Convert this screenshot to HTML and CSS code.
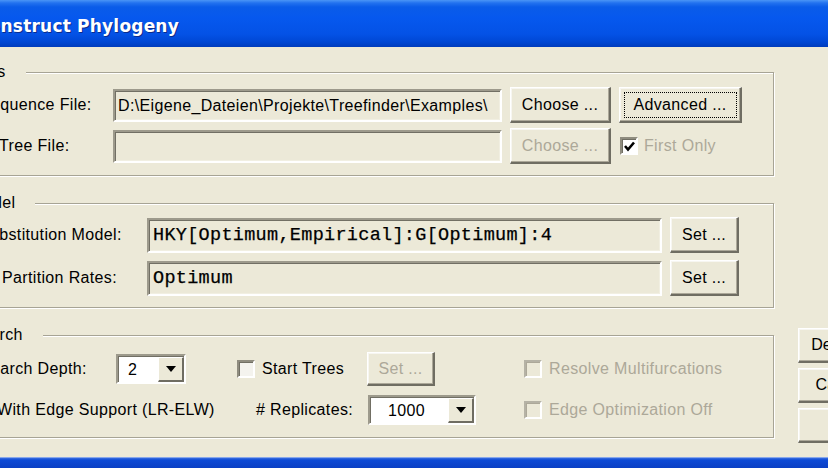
FILE: index.html
```html
<!DOCTYPE html>
<html lang="en">
<head>
    <meta charset="UTF-8">
    <title>Construct Phylogeny</title>
    <link rel="stylesheet" href="styles.css">
</head>
<body>
    <div class="titlebar"><span class="title">Construct Phylogeny</span></div>
    <div class="client">
        <div class="groups">
            <div class="group files">
                <div class="legend">Files</div>
                <div class="rows">
                    <div class="row">
                        <span class="lbl">Sequence File:</span>
                        <span class="edit">D:\Eigene_Dateien\Projekte\Treefinder\Examples\</span>
                        <button class="btn choose">Choose ...</button>
                        <button class="btn advanced">Advanced ...</button>
                    </div>
                    <div class="row">
                        <span class="lbl tree">Tree File:</span>
                        <span class="edit"></span>
                        <button class="btn choose" disabled>Choose ...</button>
                        <span class="check checked first">
                            <svg width="13" height="13" viewBox="0 0 13 13"><path d="M2 6 L5 9.5 L11 2.5" fill="none" stroke="#000" stroke-width="2.6"/></svg>
                        </span>
                        <span class="check-text off">First Only</span>
                    </div>
                </div>
            </div>

            <div class="group model">
                <div class="legend">Model</div>
                <div class="rows">
                    <div class="row">
                        <span class="lbl subst">Substitution Model:</span>
                        <span class="edit mono">HKY[Optimum,Empirical]:G[Optimum]:4</span>
                        <button class="btn set">Set ...</button>
                    </div>
                    <div class="row">
                        <span class="lbl partition">Partition Rates:</span>
                        <span class="edit mono">Optimum</span>
                        <button class="btn set">Set ...</button>
                    </div>
                </div>
            </div>

            <div class="group search">
                <div class="legend">Search</div>
                <div class="grid">
                    <div class="cell">
                        <span class="lbl">Search Depth:</span>
                        <span class="combo depth">
                            <span class="val">2</span>
                            <span class="arrow"><svg width="10" height="6" viewBox="0 0 10 6"><path d="M0 0 H10 L5 6 Z" fill="#000"/></svg></span>
                        </span>
                    </div>
                    <div class="cell">
                        <span class="check"></span>
                        <span class="check-text">Start Trees</span>
                    </div>
                    <div class="cell">
                        <button class="btn set-small" disabled>Set ...</button>
                    </div>
                    <div class="cell">
                        <span class="check off"></span>
                        <span class="check-text off">Resolve Multifurcations</span>
                    </div>

                    <div class="cell">
                        <span class="lbl edge">With Edge Support (LR-ELW)</span>
                    </div>
                    <div class="cell">
                        <span class="lbl replicates"># Replicates:</span>
                    </div>
                    <div class="cell">
                        <span class="combo reps">
                            <span class="val">1000</span>
                            <span class="arrow"><svg width="10" height="6" viewBox="0 0 10 6"><path d="M0 0 H10 L5 6 Z" fill="#000"/></svg></span>
                        </span>
                    </div>
                    <div class="cell">
                        <span class="check off"></span>
                        <span class="check-text off">Edge Optimization Off</span>
                    </div>
                </div>
            </div>
        </div>

        <div class="side">
            <button class="btn side-btn">Defaults</button>
            <button class="btn side-btn">Cancel</button>
            <button class="btn side-btn">OK</button>
        </div>
    </div>
    <div class="frame-bottom"></div>
</body>
</html>
```

FILE: styles.css
```css
* {
    box-sizing: border-box;
}
body {
    margin: 0;
    width: 828px;
    height: 468px;
    overflow: hidden;
    background: #ece9d8;
    font-family: "Liberation Sans", Arial, sans-serif;
    font-size: 16px;
    letter-spacing: 0.35px;
    color: #000;
}

/* title bar */
.titlebar {
    height: 47px;
    display: flex;
    align-items: center;
    background: linear-gradient(to bottom, #4a95f6 0, #2272ef 3px, #0a5ce9 7px, #0658ee 18px, #0452e6 34px, #0047d4 42px, #003cbc 47px);
}
.title {
    margin: 4px 0 0 -24px;
    font-family: "DejaVu Sans", sans-serif;
    font-weight: bold;
    font-size: 17px;
    letter-spacing: 0.2px;
    color: #fff;
    text-shadow: 1px 1px 0 #0b2c8c;
    white-space: nowrap;
}

/* client area */
.client {
    display: flex;
    height: 410px;
    padding-top: 25px;
}
.groups {
    flex: none;
    width: 814px;
    margin-left: -40px;
}
.group {
    border: 1px solid #a7a495;
    box-shadow: inset 1px 1px 0 #fff, 1px 1px 0 #fff;
    padding: 0 0 11px 19px;
}
.group + .group {
    margin-top: 27px;
}
.legend {
    width: max-content;
    height: 18px;
    line-height: 18px;
    margin: -10px 0 0 -10px;
    padding-right: 20px;
    background: #ece9d8;
    white-space: nowrap;
}
.rows {
    display: flex;
    flex-direction: column;
    gap: 5px;
    margin-top: 6px;
}
.model .rows {
    gap: 7px;
    margin-top: 5px;
}
.row {
    display: flex;
    align-items: center;
    height: 36px;
}
.lbl {
    flex: none;
    white-space: nowrap;
}
.files .lbl {
    width: 133px;
}
.model .lbl {
    width: 167px;
}
.lbl.tree {
    text-indent: 19px;
}
.lbl.subst {
    text-indent: -1px;
}
.lbl.partition {
    text-indent: 22px;
}

/* sunken edit box */
.edit {
    flex: none;
    width: 389px;
    height: 33px;
    padding: 0 3px;
    line-height: 29px;
    border: 2px solid;
    border-color: #9d9a8c #fff #fff #9d9a8c;
    box-shadow: inset 1px 1px 0 #716f64, inset -1px -1px 0 #f1efe2;
    background: #ece9d8;
    white-space: nowrap;
    overflow: hidden;
}
.model .edit {
    width: 515px;
    height: 35px;
    line-height: 31px;
    padding-left: 4px;
}
.mono {
    font-family: "Liberation Mono", "Courier New", monospace;
    font-size: 18.5px;
    letter-spacing: 0.3px;
    -webkit-text-stroke: 0.25px #000;
}

/* raised button */
.btn {
    flex: none;
    height: 36px;
    padding: 0;
    font: inherit;
    letter-spacing: inherit;
    color: #000;
    background: #ece9d8;
    border-style: solid;
    border-width: 1px 2px 2px 1px;
    border-color: #fff #6f6d62 #6f6d62 #fff;
    box-shadow: inset -1px -1px 0 #aca899, inset 1px 1px 0 #f7f6f1;
}
.btn:disabled {
    color: #aca899;
}
.choose {
    width: 101px;
    margin-left: 8px;
}
.advanced {
    width: 123px;
    margin-left: 8px;
    outline: 1px dotted #000;
    outline-offset: -6px;
}
.set {
    width: 69px;
    margin-left: 8px;
}
.set-small {
    width: 68px;
    height: 34px;
}

/* check boxes */
.check {
    flex: none;
    display: flex;
    align-items: center;
    justify-content: center;
    width: 18px;
    height: 18px;
    border: 2px solid;
    border-color: #8f8c7f #fff #fff #8f8c7f;
    box-shadow: inset 1px 1px 0 #716f64;
    background: #f4f3ee;
}
.check.checked {
    background: #fff;
}
.check.off {
    background: #ece9d8;
    border-color: #b5b2a5 #fff #fff #b5b2a5;
    box-shadow: inset 1px 1px 0 #aca899;
}
.check.first {
    margin-left: 9px;
}
.check-text {
    margin-left: 7px;
    white-space: nowrap;
}
.check-text.off {
    color: #aca899;
}
.first + .check-text {
    margin-left: 6px;
}

/* search grid */
.grid {
    display: grid;
    grid-template-columns: 257px 130px 157px 1fr;
    grid-auto-rows: 34px;
    row-gap: 7px;
    margin-top: 8px;
}
.search {
    padding-bottom: 10px;
}
.cell {
    display: flex;
    align-items: center;
}
.search .lbl {
    width: 136px;
}
.lbl.edge {
    width: auto;
    text-indent: 17px;
}
.lbl.replicates {
    width: auto;
    padding-left: 19px;
}

/* combo box */
.combo {
    flex: none;
    display: flex;
    height: 30px;
    border: 2px solid;
    border-color: #9d9a8c #fff #fff #9d9a8c;
    box-shadow: inset 1px 1px 0 #716f64;
    background: #fff;
}
.combo.depth {
    width: 70px;
}
.combo.reps {
    width: 108px;
    margin-left: 1px;
}
.val {
    flex: 1;
    padding: 1px 0 0 10px;
    line-height: 25px;
}
.reps .val {
    padding-left: 18px;
}
.arrow {
    flex: none;
    width: 26px;
    margin: 1px 0 0 0;
    display: flex;
    align-items: center;
    justify-content: center;
    background: #ece9d8;
    border-style: solid;
    border-width: 1px 2px 2px 1px;
    border-color: #fff #6f6d62 #6f6d62 #fff;
}

/* right-hand buttons */
.side {
    flex: none;
    display: flex;
    flex-direction: column;
    gap: 5px;
    margin-left: 24px;
    padding-top: 256px;
}
.side-btn {
    width: 86px;
    height: 35px;
    letter-spacing: 0;
}

.frame-bottom {
    height: 11px;
    background: linear-gradient(to bottom, #d6dff5 0, #3a6fe0 1px, #0d4ad6 3px, #0a3fc4 11px);
}
```
